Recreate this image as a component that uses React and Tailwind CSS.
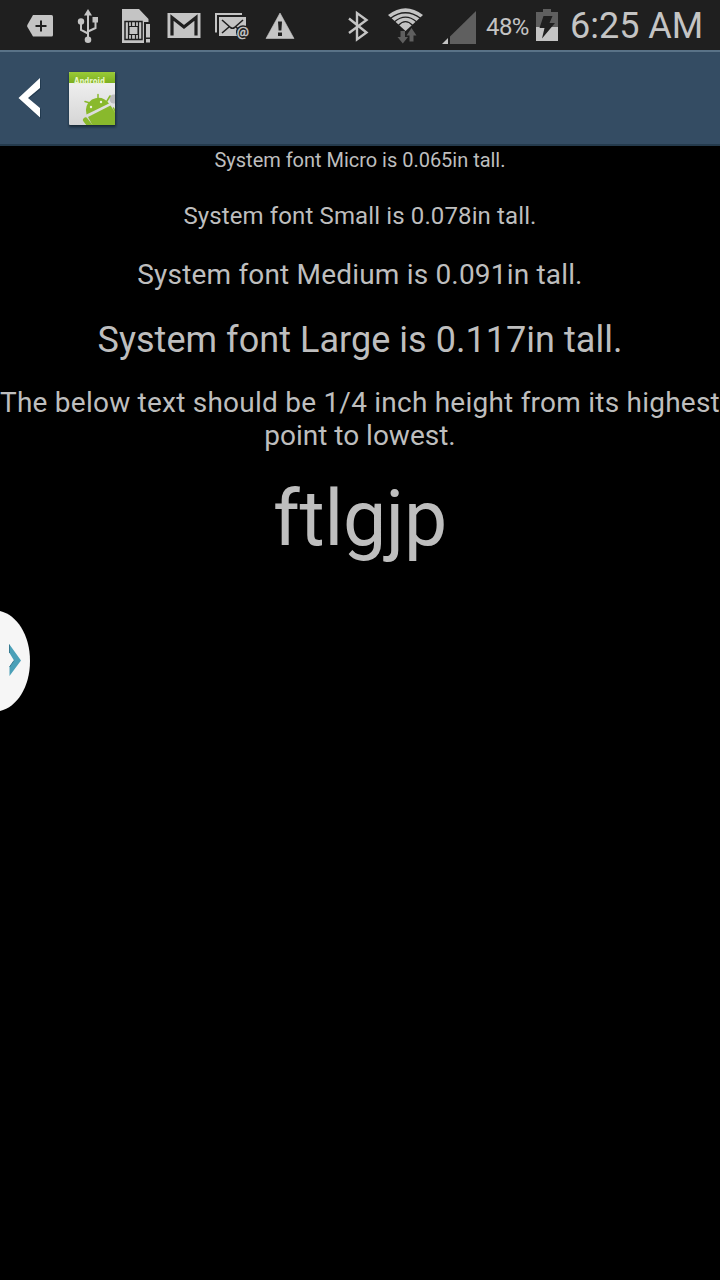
import React from "react";

function StatusIcon({ x, width = 48, children }) {
  return (
    <svg className="block h-[50px] shrink-0" width={width} height="50" viewBox={`${x} 0 ${width} 50`} fill="#c4c4c4">
      {children}
    </svg>
  );
}

function StatusBar() {
  return (
    <header className="flex h-[50px] items-center bg-[#1f1f1f] pl-4 text-[#c4c4c4]">
      <StatusIcon x={16}>
        <path d="M33 15H51.500Q53 15 53 16.500V35Q53 36.500 51.500 36.500H33L27.300 26.700Q27 26 27.300 25Z" />
        <path d="M41 20.500v11M35.500 26h11" stroke="#1f1f1f" strokeWidth="2" />
      </StatusIcon>
      <StatusIcon x={64}>
        <path d="M88 40V14M81 23v7l7 3.500M95.500 20v8l-7.500 3.500" fill="none" stroke="#c4c4c4" strokeWidth="2" />
        <path d="M88 9l4 6.500h-8zM92.500 17h5.500v5.500h-5.500z" />
        <circle cx="81" cy="21.500" r="3.200" />
        <circle cx="88" cy="39.700" r="3.300" />
      </StatusIcon>
      <StatusIcon x={112}>
        <path d="M122 9h17l9.500 10v3.500H144V43H122z" />
        <path d="M125 21.500h17v18h-17z" fill="none" stroke="#1f1f1f" strokeWidth="1.500" />
        <path d="M128.500 22v17M138.500 22v17M131.500 22v4.500M135.500 22v4.500M131.500 35v4.500M135.500 35v4.500" stroke="#1f1f1f" strokeWidth="1.200" />
        <path d="M129 26.500h9v8h-9z" fill="none" stroke="#1f1f1f" />
        <path d="M144 22h8v22h-8z" fill="#1f1f1f" />
        <path d="M146 24h4v13.500h-4zM146 39h4v3.500h-4z" />
      </StatusIcon>
      <StatusIcon x={160}>
        <path d="M167.500 13h33v25h-33z" />
        <path d="M172 35.500V17.500L184 27l12-9.500v18" fill="none" stroke="#1f1f1f" strokeWidth="3.200" />
      </StatusIcon>
      <StatusIcon x={208}>
        <path d="M216 32.500V14h26" fill="none" stroke="#c4c4c4" strokeWidth="2" />
        <path d="M219 17h27v19h-27z" />
        <path d="M222 20l8.500 7.500q2 1.500 4 0L243 20M222 33l7-6M242 33l-6-6" fill="none" stroke="#1f1f1f" strokeWidth="1.600" />
        <circle cx="243" cy="32.300" r="7" fill="#1f1f1f" />
        <text x="236.700" y="35.600" fontFamily="Roboto, sans-serif" fontSize="13.500" stroke="#c4c4c4" strokeWidth=".5">@</text>
      </StatusIcon>
      <StatusIcon x={256}>
        <path d="M280 13l14 25.500h-28z" stroke="#c4c4c4" strokeLinejoin="round" strokeWidth=".6" />
        <path d="M278 21.500h4l-.6 9h-2.800zM278 32.500h4v3.500h-4z" fill="#1f1f1f" />
      </StatusIcon>
      <div className="w-8 shrink-0" />
      <StatusIcon x={336}>
        <path d="M349 18.500l17.500 14-9.500 7V13l9.500 7L349 33" fill="none" stroke="#c4c4c4" strokeWidth="2.400" />
      </StatusIcon>
      <StatusIcon x={384}>
        <path d="M388 15Q405.500 1.500 423 15L405.500 31Z" />
        <path d="M390.500 18.200Q405.500 7.300 420.500 18.200M394.500 21.800Q405.500 12.600 416.500 21.800M398.500 25.200Q405.500 18 412.500 25.200" fill="none" stroke="#1f1f1f" strokeWidth="1.300" />
        <path d="M400.500 31h4.500v6h3l-5.200 6.500-5.300-6.500h3zM409.500 41.500v-6h-3l5-7.500 5 7.500h-3v6z" fill="#5f5f5f" />
      </StatusIcon>
      <StatusIcon x={432}>
        <path d="M476 11v33h-26v-7.500z" fill="#5f5f5f" />
        <path d="M448 38v6h-6z" />
      </StatusIcon>
      <span className="ml-[6px] mt-[3px] w-[44px] whitespace-nowrap text-2xl leading-7 tracking-[-0.6px]">48%</span>
      <StatusIcon x={530} width={36}>
        <path d="M543 9h8v3h7v15h-22V12h7z" fill="#5f5f5f" />
        <path d="M536 27h22v14h-22z" />
        <path d="M543.500 16h9l-3 7h5.500L542 38.500l2.500-10.500h-5z" fill="#1f1f1f" />
      </StatusIcon>
      <span className="ml-1 mt-px whitespace-nowrap text-[36px] leading-[44px]">6:25 AM</span>
    </header>
  );
}

function ActionBar() {
  return (
    <nav className="flex h-24 items-center border-t-2 border-b-2 border-t-[#597287] border-b-[#243a4c] bg-[#344c63] pl-4">
      <svg className="block" width="28" height="50" viewBox="16 73 28 50">
        <path d="M41 79v10l-12.500 10L41 109v10L19 99z" fill="#172f42" opacity=".6" />
        <path d="M40 78v10L28 98l12 10v9.500L18.500 98z" fill="#fff" />
      </svg>
      <svg className="ml-[20px] block" width="56" height="64" viewBox="64 66 56 64">
        <defs>
          <linearGradient id="paper" x1="0" y1="0" x2="0" y2="1">
            <stop stopColor="#f5f5f5" />
            <stop offset="1" stopColor="#d5d5d5" />
          </linearGradient>
          <linearGradient id="green" x1="0" y1="0" x2="0" y2="1">
            <stop stopColor="#9acb37" />
            <stop offset="1" stopColor="#7daf20" />
          </linearGradient>
          <filter id="shade" x="-20%" y="-20%" width="140%" height="140%">
            <feGaussianBlur stdDeviation="1.200" />
          </filter>
          <clipPath id="page"><path d="M69 72h46v53H69z" /></clipPath>
        </defs>
        <rect x="69" y="73" width="47" height="54" rx="1" fill="#101c26" opacity=".7" filter="url(#shade)" />
        <rect x="69" y="72" width="46" height="53" rx="1" fill="url(#paper)" />
        <path d="M70 72h44q1 0 1 1v10H69V73q0-1 1-1" fill="url(#green)" />
        <text x="74" y="83.500" fontFamily="DejaVu Sans, sans-serif" fontSize="8.500" fontWeight="700" fill="#e8f5c8" textLength="31" lengthAdjust="spacingAndGlyphs">Android</text>
        <g clipPath="url(#page)">
          <circle cx="114" cy="99" r="4.500" fill="#bcbcbc" />
          <path d="M86.500 114.500Q84 105 92 99.500Q102 94.500 109 103.500Z" fill="#89b92c" />
          <path d="M88 117L110.500 105.500L122 123V128H94z" fill="#89b92c" />
          <path d="M90 103l-5-1.500M98 99v-4.500M107 101l3-5M113.500 108l4 8" fill="none" stroke="#89b92c" strokeWidth="1.500" strokeLinecap="round" />
          <path d="M85.500 120l7 9" stroke="#89b92c" strokeWidth="5" strokeLinecap="round" />
          <circle cx="91" cy="107" r="1.200" fill="#edf3df" />
          <circle cx="101" cy="102" r="1.200" fill="#edf3df" />
        </g>
      </svg>
    </nav>
  );
}

export default function App() {
  return (
    <div className="relative h-[1280px] w-[720px] overflow-hidden bg-black font-['Roboto',sans-serif] text-[#bebebe]">
      <StatusBar />
      <ActionBar />
      <main className="flex flex-col items-center whitespace-nowrap pt-[2px] text-center">
        <p className="text-xl leading-6 tracking-[-0.02px]">System font Micro is 0.065in tall.</p>
        <p className="mt-[30px] text-2xl leading-7 tracking-[0.12px]">System font Small is 0.078in tall.</p>
        <p className="mt-7 text-[28px] leading-[33px] tracking-[0.18px]">System font Medium is 0.091in tall.</p>
        <p className="mt-7 text-4xl leading-[42px] tracking-[0.04px]">System font Large is 0.117in tall.</p>
        <p className="mt-[25px] text-[28px] leading-[33px]"><span className="tracking-[0.23px]">The below text should be 1/4 inch height from its highest</span><br />point to lowest.</p>
        <p className="mt-[21px] text-[77px] leading-[92px] tracking-[-0.3px]">ftlgjp</p>
      </main>
      <button className="absolute left-0 top-[609px] h-[104px] w-[30px]" aria-label="Open panel">
        <svg className="block" width="30" height="104" viewBox="0 609 30 104">
          <path d="M0 611C17 615 30 635 30 661S17 707 0 711Z" fill="#f6f6f6" />
          <path d="M9.500 644.500L21 660.500 9.500 676V667L14 660.500 9.500 653z" fill="#4ba0b8" />
          <path d="M9.500 667L14 660.500M9.500 644.500V653" fill="none" stroke="#377b91" />
        </svg>
      </button>
    </div>
  );
}
